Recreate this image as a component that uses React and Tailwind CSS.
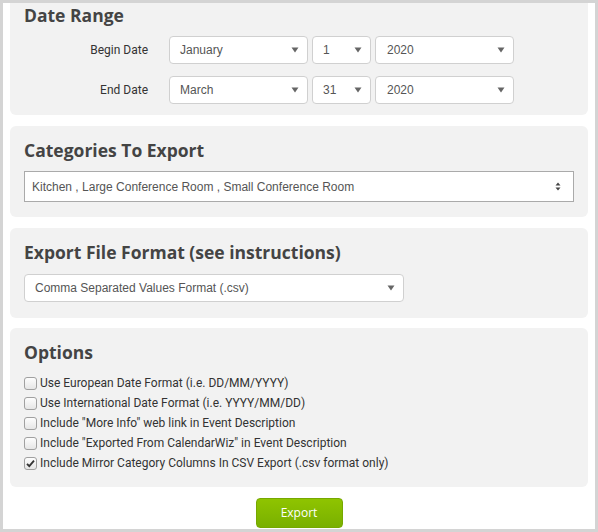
import React from "react";

const Arrow = () => (
  <svg width="8" height="6" viewBox="0 0 8 6" className="shrink-0">
    <path d="M0.5 0.5 H7.5 L4 5.5 Z" fill="#666" />
  </svg>
);

function Sel({ w, text, pl = "pl-[10px]", pr = "pr-[8px]" }) {
  return (
    <div
      className={`${w} h-[28px] bg-white border border-[#d0d0d0] rounded-[4px] flex items-center justify-between ${pl} ${pr} text-[12px] text-[#555] font-['Liberation_Sans',Arial,sans-serif]`}
    >
      <span>{text}</span>
      <Arrow />
    </div>
  );
}

function Check({ checked, label }) {
  return (
    <div className="flex items-center h-[20px]">
      <div className="w-[13px] h-[13px] rounded-[3px] border border-[#a0a0a0] bg-gradient-to-b from-[#fdfdfd] to-[#e6e6e6] flex items-center justify-center mr-[3px]">
        {checked && (
          <svg width="9" height="9" viewBox="0 0 9 9">
            <path d="M1 4.8 L3.3 7.2 L8 1.6" stroke="#333" strokeWidth="1.8" fill="none" />
          </svg>
        )}
      </div>
      <span className="text-[12px] text-[#333] font-['Roboto',sans-serif]">{label}</span>
    </div>
  );
}

const H = ({ children }) => (
  <div className="text-[17.5px] leading-[24px] font-bold text-[#444] font-['Open_Sans',sans-serif]">
    {children}
  </div>
);

export default function App() {
  return (
    <div className="w-[598px] h-[532px] bg-[#d4d4d4] p-[3px]">
      <div className="w-full h-full bg-white overflow-hidden px-[7px] flex flex-col">
        {/* Date range */}
        <div className="bg-[#f2f2f2] rounded-b-[6px] pl-[14px] pb-[11px] mb-[11px]">
          <H>Date Range</H>
          <div className="flex items-center mt-[9px]">
            <div className="w-[124px] text-right text-[12px] text-[#333] font-['Roboto',sans-serif] pr-[0px]">Begin Date</div>
            <div className="flex gap-[4px] ml-[21px]">
              <Sel w="w-[139px]" text="January" />
              <Sel w="w-[59px]" text="1" />
              <Sel w="w-[139px]" text="2020" pl="pl-[11px]" />
            </div>
          </div>
          <div className="flex items-center mt-[12px]">
            <div className="w-[124px] text-right text-[12px] text-[#333] font-['Roboto',sans-serif]">End Date</div>
            <div className="flex gap-[4px] ml-[21px]">
              <Sel w="w-[139px]" text="March" />
              <Sel w="w-[59px]" text="31" />
              <Sel w="w-[139px]" text="2020" pl="pl-[11px]" />
            </div>
          </div>
        </div>

        {/* Categories */}
        <div className="bg-[#f2f2f2] rounded-[6px] px-[14px] pt-[12px] pb-[15px] mb-[11px]">
          <H>Categories To Export</H>
          <div className="mt-[9px] h-[31px] w-[550px] bg-white border border-[#aaa] flex items-center justify-between pl-[7px] pr-[12px] text-[12px] text-[#555] font-['Liberation_Sans',Arial,sans-serif]">
            <span>Kitchen , Large Conference Room , Small Conference Room</span>
            <svg width="6" height="9" viewBox="0 0 6 9">
              <path d="M0.5 3.5 L3 0.5 L5.5 3.5 Z M0.5 5.5 L3 8.5 L5.5 5.5 Z" fill="#444" />
            </svg>
          </div>
        </div>

        {/* Export format */}
        <div className="bg-[#f2f2f2] rounded-[6px] px-[14px] pt-[12px] pb-[16px] mb-[10px]">
          <H>Export File Format (see instructions)</H>
          <div className="mt-[10px]">
            <Sel w="w-[380px]" text="Comma Separated Values Format (.csv)" />
          </div>
        </div>

        {/* Options */}
        <div className="bg-[#f2f2f2] rounded-[6px] px-[14px] pt-[12px] pb-[14px] mb-[11px]">
          <H>Options</H>
          <div className="mt-[9px] flex flex-col">
            <Check label="Use European Date Format (i.e. DD/MM/YYYY)" />
            <Check label="Use International Date Format (i.e. YYYY/MM/DD)" />
            <Check label={'Include "More Info" web link in Event Description'} />
            <Check label={'Include "Exported From CalendarWiz" in Event Description'} />
            <Check checked label="Include Mirror Category Columns In CSV Export (.csv format only)" />
          </div>
        </div>

        <div className="flex justify-center">
          <div className="w-[87px] h-[30px] rounded-[4px] border border-[#76a800] bg-gradient-to-b from-[#8fc400] to-[#79b000] flex items-center justify-center text-white text-[12px] font-['Open_Sans',sans-serif]">
            Export
          </div>
        </div>
      </div>
    </div>
  );
}
